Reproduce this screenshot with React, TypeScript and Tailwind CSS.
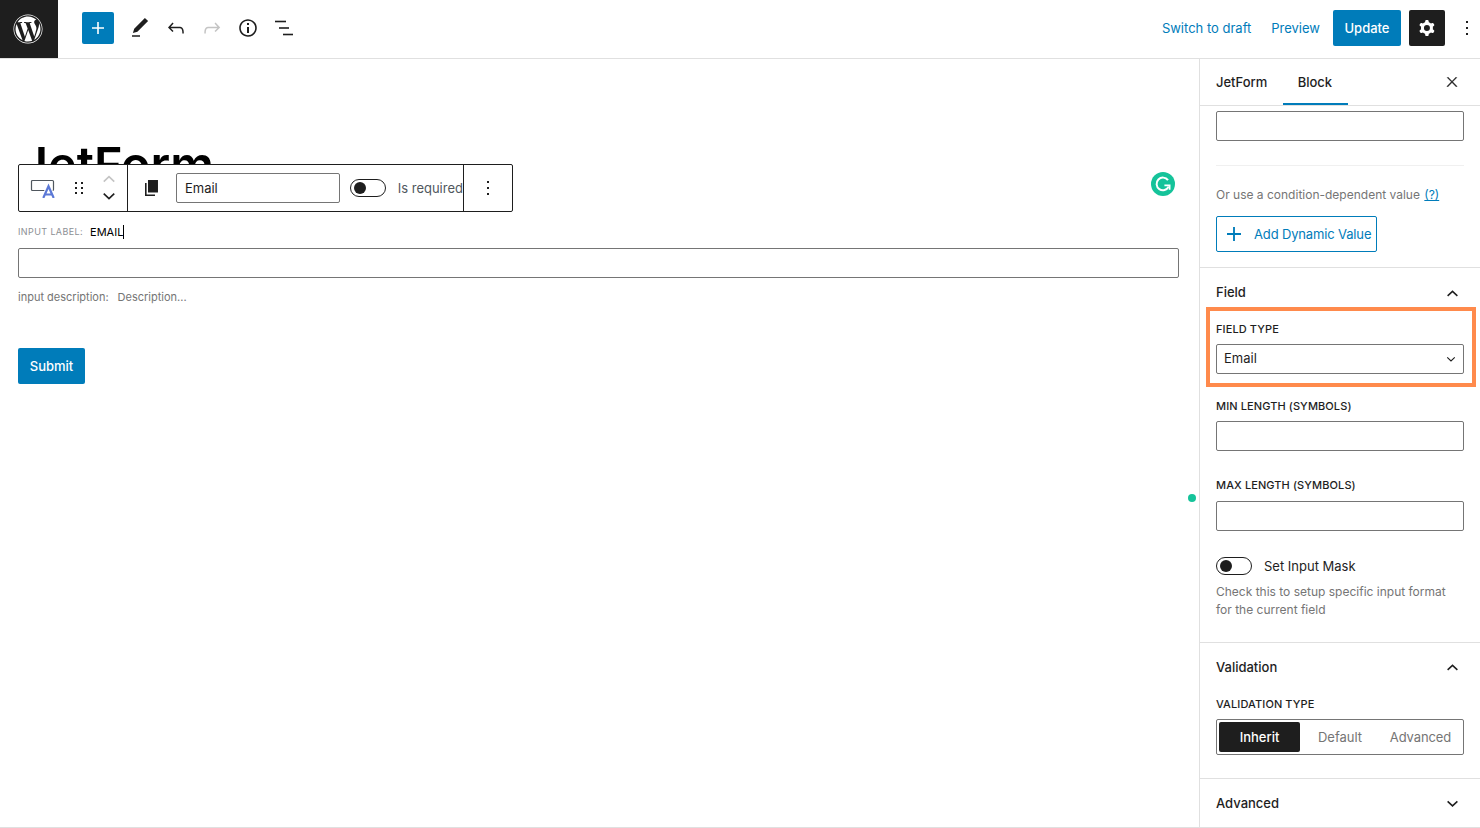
import { FaWordpress } from "react-icons/fa";

const WpIcon = ({ d, size = 24, className = "" }: { d: string; size?: number; className?: string }) => (
  <svg width={size} height={size} viewBox="0 0 24 24" fill="currentColor" className={className}>
    <path d={d} fillRule="evenodd" />
  </svg>
);

const icons = {
  plus: "M18 11.2h-5.2V6h-1.6v5.2H6v1.6h5.2V18h1.6v-5.2H18z",
  pencil: "M20.1 5.1L16.9 2 6.2 12.7l-1.3 4.4 4.5-1.3L20.1 5.1zM4 20.8h8v-1.5H4v1.5z",
  undo: "M18.3 11.7c-.6-.6-1.4-.9-2.3-.9H6.7l2.9-3.3-1.1-1-4.5 5L8.5 16l1-1-2.7-2.7H16c.5 0 .9.2 1.3.5 1 1 1 3.4 1 4.5v.3h1.5v-.2c0-1.5 0-4.3-1.5-5.7z",
  redo: "M15.6 6.5l-1.1 1 2.9 3.3H8c-.9 0-1.7.3-2.3.9-1.4 1.5-1.4 4.2-1.4 5.6v.2h1.5v-.3c0-1.1 0-3.5 1-4.5.3-.3.7-.5 1.3-.5h9.2L14.5 15l1.1 1.1 4.6-4.6-4.6-5z",
  info: "M12 3.2c-4.8 0-8.8 3.9-8.8 8.8 0 4.8 3.9 8.8 8.8 8.8 4.8 0 8.8-3.9 8.8-8.8 0-4.8-4-8.8-8.8-8.8zm0 16c-4 0-7.2-3.3-7.2-7.2C4.8 8 8 4.8 12 4.8s7.2 3.3 7.2 7.2c0 4-3.2 7.2-7.2 7.2zM11 17h2v-6h-2v6zm0-8h2V7h-2v2z",
  cog: "M10.289 4.836A1 1 0 0111.275 4h1.306a1 1 0 01.987.836l.244 1.466c.787.26 1.503.679 2.108 1.218l1.393-.522a1 1 0 011.216.437l.653 1.13a1 1 0 01-.23 1.273l-1.148.944a6.025 6.025 0 010 2.435l1.149.946a1 1 0 01.23 1.272l-.653 1.13a1 1 0 01-1.216.437l-1.394-.522c-.605.54-1.32.958-2.108 1.218l-.244 1.466a1 1 0 01-.987.836h-1.306a1 1 0 01-.986-.836l-.244-1.466a5.995 5.995 0 01-2.108-1.218l-1.394.522a1 1 0 01-1.217-.436l-.653-1.131a1 1 0 01.23-1.272l1.149-.946a6.026 6.026 0 010-2.435l-1.148-.944a1 1 0 01-.23-1.272l.653-1.131a1 1 0 011.217-.437l1.393.522a5.994 5.994 0 012.108-1.218l.244-1.466zM14.929 12a3 3 0 11-6 0 3 3 0 016 0z",
  more: "M13 19h-2v-2h2v2zm0-6h-2v-2h2v2zm0-6h-2V5h2v2z",
  close: "M13 11.8l6.1-6.3-1-1-6.1 6.2-6.1-6.2-1 1 6.1 6.3-6.5 6.7 1 1 6.5-6.6 6.5 6.6 1-1z",
};

const ListViewIcon = () => (
  <svg width="24" height="24" viewBox="0 0 24 24" fill="currentColor">
    <rect x="3" y="4.7" width="11" height="1.6" />
    <rect x="7" y="11.2" width="10" height="1.6" />
    <rect x="11" y="17.7" width="10" height="1.6" />
  </svg>
);

const Chevron = ({ up = false, size = 12, className = "" }: { up?: boolean; size?: number; className?: string }) => (
  <svg width={size} height={size} viewBox="0 0 12 12" fill="none" stroke="currentColor" strokeWidth="1.4" className={className}>
    <path d={up ? "M1.5 8.2 6 4l4.5 4.2" : "M1.5 4 6 8.2 10.5 4"} />
  </svg>
);

const BlockIcon = () => (
  <svg width="26" height="20" viewBox="0 0 26 20" fill="none">
    <rect x="1.5" y="2.5" width="22" height="10" rx="1" stroke="#50575e" strokeWidth="1.2" />
    <path d="M13 20 18.5 8 24 20" stroke="#fff" strokeWidth="4" />
    <path d="M13.3 20 18.5 8.2 23.7 20M15 16.5h7" stroke="#5b78d6" strokeWidth="2.2" />
  </svg>
);

const CopyIcon = () => (
  <svg width="14" height="16" viewBox="0 0 14 16" fill="#1e1e1e">
    <rect x="3" y="0" width="10" height="12.5" />
    <path d="M0 3h1.6v11.4H10V16H0z" />
  </svg>
);

const DragHandle = () => (
  <svg width="10" height="14" viewBox="0 0 10 14" fill="#1e1e1e">
    <rect x="1" y="1" width="2" height="2" />
    <rect x="7" y="1" width="2" height="2" />
    <rect x="1" y="6" width="2" height="2" />
    <rect x="7" y="6" width="2" height="2" />
    <rect x="1" y="11" width="2" height="2" />
    <rect x="7" y="11" width="2" height="2" />
  </svg>
);

const Grammarly = () => (
  <svg width="24" height="24" viewBox="0 0 24 24" fill="none">
    <circle cx="12" cy="12" r="12" fill="#15c39a" />
    <path d="M17 8.2A6.3 6.3 0 1 0 17.6 14.6" stroke="#fff" strokeWidth="2" />
    <path d="M13.4 13.4h5.2v4.4" stroke="#fff" strokeWidth="1.8" />
  </svg>
);

const Toggle = () => (
  <span className="flex h-[18px] w-9 shrink-0 items-center rounded-full border border-[#1e1e1e] bg-white pl-[3px]">
    <span className="h-3 w-3 rounded-full bg-[#1e1e1e]" />
  </span>
);

const FieldLabel = ({ children }: { children: string }) => (
  <div className="text-[11px] leading-[14px] font-medium uppercase tracking-[0.1px] text-[#1e1e1e]">{children}</div>
);

const TextBox = ({ className = "" }: { className?: string }) => (
  <div className={`h-[30px] rounded-[2px] border border-[#757575] bg-white ${className}`} />
);

const PanelHeader = ({ title, open = true }: { title: string; open?: boolean }) => (
  <div className="flex h-[18px] items-center justify-between pr-[5px] text-[13px] font-medium text-[#1e1e1e]">
    <span>{title}</span>
    <Chevron up={open} size={13} />
  </div>
);

const Header = () => (
  <header className="flex h-[59px] shrink-0 items-center border-b border-[#e0e0e0] bg-white pb-[2px] text-[#1e1e1e]">
    <div className="-mb-[2px] flex h-[58px] w-[58px] items-center justify-center bg-[#1e1e1e] pr-[2px] text-white">
      <FaWordpress size={30} />
    </div>
    <button className="ml-6 flex h-8 w-8 items-center justify-center rounded-[2px] bg-[#007cba] text-white">
      <WpIcon d={icons.plus} />
    </button>
    <div className="ml-[14px] flex items-center gap-3">
      <WpIcon d={icons.pencil} />
      <WpIcon d={icons.undo} />
      <WpIcon d={icons.redo} className="text-[#c4c4c4]" />
      <WpIcon d={icons.info} />
      <ListViewIcon />
    </div>
    <div className="ml-auto flex items-center text-[13px] text-[#007cba]">
      <span className="pt-[1px]">Switch to draft</span>
      <span className="ml-5 pt-[1px]">Preview</span>
      <button className="ml-[13px] h-9 w-[68px] rounded-[2px] bg-[#007cba] pt-[1px] font-medium text-white">Update</button>
      <button className="ml-2 flex h-9 w-9 items-center justify-center rounded-[2px] bg-[#1e1e1e] text-white">
        <WpIcon d={icons.cog} />
      </button>
      <WpIcon d={icons.more} className="ml-[10px] mr-[1px] text-[#1e1e1e]" />
    </div>
  </header>
);

const BlockToolbar = () => (
  <div className="absolute left-[18px] top-[105px] flex h-[48px] w-[495px] items-stretch rounded-[2px] border border-[#1e1e1e] bg-white text-[13px] text-[#1e1e1e]">
    <div className="flex w-[109px] items-center border-r border-[#1e1e1e] pl-[11px]">
      <BlockIcon />
      <span className="ml-[18px]"><DragHandle /></span>
      <div className="-mt-[1px] ml-[18px] flex flex-col items-center gap-[3px]">
        <Chevron up size={14} className="text-[#c4c4c4]" />
        <Chevron size={14} />
      </div>
    </div>
    <div className="flex w-[336px] items-center border-r border-[#1e1e1e] pl-[17px]">
      <CopyIcon />
      <div className="ml-[17px] flex h-[30px] w-[164px] items-center rounded-[2px] border border-[#757575] pl-2 pt-[1px]">Email</div>
      <span className="ml-[10px]"><Toggle /></span>
      <span className="ml-3 whitespace-nowrap pt-[1px] text-[#50575e]">Is required</span>
    </div>
    <div className="flex flex-1 items-center justify-center">
      <WpIcon d={icons.more} />
    </div>
  </div>
);

const Canvas = () => (
  <main className="relative min-w-0 flex-1 overflow-hidden bg-white pl-[18px] pr-5">
    <h1 className="ml-[2px] mt-[76px] h-[90px] text-[48.5px] leading-[60px] font-semibold text-black">JetForm</h1>
    <BlockToolbar />
    <div className="absolute right-[24px] top-[113px]"><Grammarly /></div>
    <div className="absolute right-[3px] top-[435px] h-2 w-2 rounded-full bg-[#15c39a]" />
    <div className="flex items-center">
      <span className="text-[9px] uppercase tracking-[0.4px] text-[#8c8f94]">Input label:</span>
      <span className="ml-[7px] border-r border-black text-[11px] leading-[14px] text-black">EMAIL</span>
    </div>
    <TextBox className="mt-[9px]" />
    <div className="mt-[12px] flex items-center text-[11px] leading-[14px] text-[#757575]">
      <span>input description:</span>
      <span className="ml-[9px]">Description...</span>
    </div>
    <button className="mt-[44px] block h-9 w-[67px] rounded-[2px] bg-[#007cba] pt-[1px] text-[13px] font-medium text-white">Submit</button>
  </main>
);

const Sidebar = () => (
  <aside className="relative w-[281px] shrink-0 overflow-hidden border-l border-[#e0e0e0] bg-white text-[#1e1e1e]">
    <div className="flex h-[47px] items-center border-b border-[#e0e0e0] pl-4 pr-5 text-[13px] font-medium">
      <span className="pt-[2px]">JetForm</span>
      <span className="relative ml-[16px] flex h-[46px] w-[65px] items-center justify-center border-b-2 border-[#007cba] pr-[2px] pt-[4px]">Block</span>
      <WpIcon d={icons.close} size={16} className="ml-auto stroke-current stroke-[0.6]" />
    </div>

    <div className="border-b border-[#e0e0e0] px-4 pb-[15px] pt-[5px]">
      <TextBox className="w-[248px]" />
      <div className="mt-[24px] w-[248px] border-t border-[#f0f0f0]" />
      <div className="mt-[21px] text-[12px] leading-[16px] text-[#757575]">
        Or use a condition-dependent value <span className="ml-[1px] text-[#007cba] underline">(?)</span>
      </div>
      <button className="mt-[13px] flex h-9 w-[161px] items-center rounded-[2px] border border-[#007cba] pl-[3px] text-[13px] tracking-[-0.15px] text-[#007cba]">
        <WpIcon d={icons.plus} size={28} />
        <span className="ml-[6px] pt-[2px]">Add Dynamic Value</span>
      </button>
    </div>

    <div className="border-b border-[#e0e0e0] px-4 pb-[23px] pt-[16px]">
      <PanelHeader title="Field" />
      <div className="mt-[20px]"><FieldLabel>Field Type</FieldLabel></div>
      <div className="mt-2 flex h-[30px] w-[248px] items-center justify-between rounded-[2px] border border-[#757575] pl-[7px] pr-[7px] text-[13px]">
        <span>Email</span>
        <Chevron size={10} />
      </div>
      <div className="mt-[25px]"><FieldLabel>Min Length (Symbols)</FieldLabel></div>
      <TextBox className="mt-2 w-[248px]" />
      <div className="mt-[27px]"><FieldLabel>Max Length (Symbols)</FieldLabel></div>
      <TextBox className="mt-[9px] w-[248px]" />
      <div className="mt-[25px] flex items-center">
        <Toggle />
        <span className="ml-3 pt-[1px] text-[13px]">Set Input Mask</span>
      </div>
      <p className="mt-[6px] w-[248px] text-[12px] leading-[18px] text-[#757575]">
        Check this to setup specific input format for the current field
      </p>
    </div>

    <div className="border-b border-[#e0e0e0] px-4 pb-[23px] pt-[16px]">
      <PanelHeader title="Validation" />
      <div className="mt-[20px]"><FieldLabel>Validation Type</FieldLabel></div>
      <div className="mt-2 flex h-9 w-[248px] items-center rounded-[2px] border border-[#757575] p-[2px] text-[13px] text-[#757575]">
        <span className="flex h-[30px] w-[81px] items-center justify-center rounded-[2px] bg-[#1e1e1e] pt-[2px] font-medium text-white">Inherit</span>
        <span className="w-[80px] pt-[2px] text-center">Default</span>
        <span className="flex-1 pt-[2px] text-center tracking-[-0.1px]">Advanced</span>
      </div>
    </div>

    <div className="px-4 pt-[16px]">
      <PanelHeader title="Advanced" open={false} />
    </div>

    <div className="pointer-events-none absolute left-[6px] top-[248px] h-[80px] w-[270px] border-4 border-[#ff8a4c]" />
  </aside>
);

export default function App() {
  return (
    <div className="flex h-[828px] w-[1480px] flex-col overflow-hidden bg-white font-['Inter',sans-serif]">
      <Header />
      <div className="flex min-h-0 flex-1 border-b border-[#e0e0e0]">
        <Canvas />
        <Sidebar />
      </div>
    </div>
  );
}
